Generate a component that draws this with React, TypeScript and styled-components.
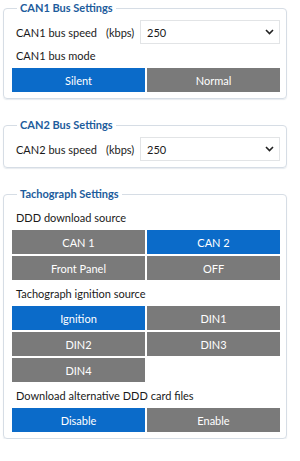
import React, { useState } from 'react';
import styled, { createGlobalStyle, css } from 'styled-components';

const GlobalStyle = createGlobalStyle`
  body {
    margin: 0;
    background: #ffffff;
    font-family: Lato, 'Open Sans', sans-serif;
  }
`;

const speeds = ['125', '250', '500', '1000'];

type Group = { label: string; options: string[]; initial: string };

const tachoGroups: Group[] = [
  { label: 'DDD download source', options: ['CAN 1', 'CAN 2', 'Front Panel', 'OFF'], initial: 'CAN 2' },
  {
    label: 'Tachograph ignition source',
    options: ['Ignition', 'DIN1', 'DIN2', 'DIN3', 'DIN4'],
    initial: 'Ignition',
  },
  { label: 'Download alternative DDD card files', options: ['Disable', 'Enable'], initial: 'Disable' },
];

const Chevron = () => (
  <svg width="9" height="6" viewBox="0 0 9 6">
    <path d="M1 1 L4.5 4.5 L8 1" fill="none" stroke="#222" strokeWidth="1.6" />
  </svg>
);

const SpeedRow: React.FC<{ name: string }> = ({ name }) => {
  const [speed, setSpeed] = useState('250');
  return (
    <Row>
      <Label>
        <Name>{name}</Name>
        <span>(kbps)</span>
      </Label>
      <SelectWrap>
        <Select value={speed} onChange={e => setSpeed(e.target.value)}>
          {speeds.map(s => (
            <option key={s}>{s}</option>
          ))}
        </Select>
        <ChevronBox>
          <Chevron />
        </ChevronBox>
      </SelectWrap>
    </Row>
  );
};

const Toggle: React.FC<Group> = ({ label, options, initial }) => {
  const [value, setValue] = useState(initial);
  return (
    <Section>
      <Caption>{label}</Caption>
      <Grid>
        {options.map(o => (
          <OptionButton key={o} $active={o === value} onClick={() => setValue(o)}>
            {o}
          </OptionButton>
        ))}
      </Grid>
    </Section>
  );
};

const App: React.FC = () => (
  <>
    <GlobalStyle />
    <Page>
      <Box>
        <Legend>CAN1 Bus Settings</Legend>
        <SpeedRow name="CAN1 bus speed" />
        <Toggle label="CAN1 bus mode" options={['Silent', 'Normal']} initial="Silent" />
      </Box>
      <Box>
        <Legend>CAN2 Bus Settings</Legend>
        <SpeedRow name="CAN2 bus speed" />
      </Box>
      <Box>
        <Legend>Tachograph Settings</Legend>
        <Stack>
          {tachoGroups.map(g => (
            <Toggle key={g.label} {...g} />
          ))}
        </Stack>
      </Box>
    </Page>
  </>
);

const Page = styled.div`
  width: 300px;
  padding: 0 0 0 3px;
  box-sizing: border-box;
  display: flex;
  flex-direction: column;
  gap: 18px;
`;

const Box = styled.fieldset`
  width: 284px;
  box-sizing: border-box;
  margin: 0;
  padding: 4px 6px 6px 8px;
  border: 1px solid #d6dde5;
  border-radius: 4px;
  box-shadow: 0 1px 1px rgba(160, 175, 190, 0.25);
  min-width: 0;
`;

const Legend = styled.legend`
  margin-left: 5px;
  padding: 0 3px;
  font-size: 11px;
  line-height: 16px;
  font-weight: 700;
  color: #1d5c9c;
`;

const Stack = styled.div`
  display: flex;
  flex-direction: column;
  gap: 2px;
`;

const Row = styled.div`
  display: flex;
  align-items: center;
  height: 24px;
`;

const textStyle = css`
  font-size: 11px;
  color: #1a1a1a;
`;

const Label = styled.div`
  ${textStyle};
  width: 128px;
  padding-left: 4px;
  box-sizing: border-box;
  display: flex;
  white-space: nowrap;
`;

const Name = styled.span`
  width: 90px;
`;

const SelectWrap = styled.div`
  position: relative;
  flex: 1;
  height: 24px;
`;

const Select = styled.select`
  ${textStyle};
  appearance: none;
  width: 100%;
  height: 100%;
  margin: 0;
  padding: 0 20px 0 6px;
  font-family: inherit;
  background: #fff;
  border: 1px solid #e2e4e6;
  border-radius: 0;
  outline: none;
`;

const ChevronBox = styled.span`
  position: absolute;
  right: 6px;
  top: 9px;
  display: flex;
  pointer-events: none;
`;

const Section = styled.div`
  display: flex;
  flex-direction: column;
`;

const Caption = styled.div`
  ${textStyle};
  height: 24px;
  line-height: 24px;
  padding-left: 4px;
  white-space: nowrap;
`;

const Grid = styled.div`
  display: grid;
  grid-template-columns: 1fr 1fr;
  gap: 2px;
`;

const OptionButton = styled.button<{ $active: boolean }>`
  height: 24px;
  margin: 0;
  padding: 0;
  border: none;
  font-family: inherit;
  font-size: 11px;
  color: #ffffff;
  cursor: pointer;
  background: ${p => (p.$active ? '#0b6bc9' : '#7a7a7a')};
`;

export default App;
